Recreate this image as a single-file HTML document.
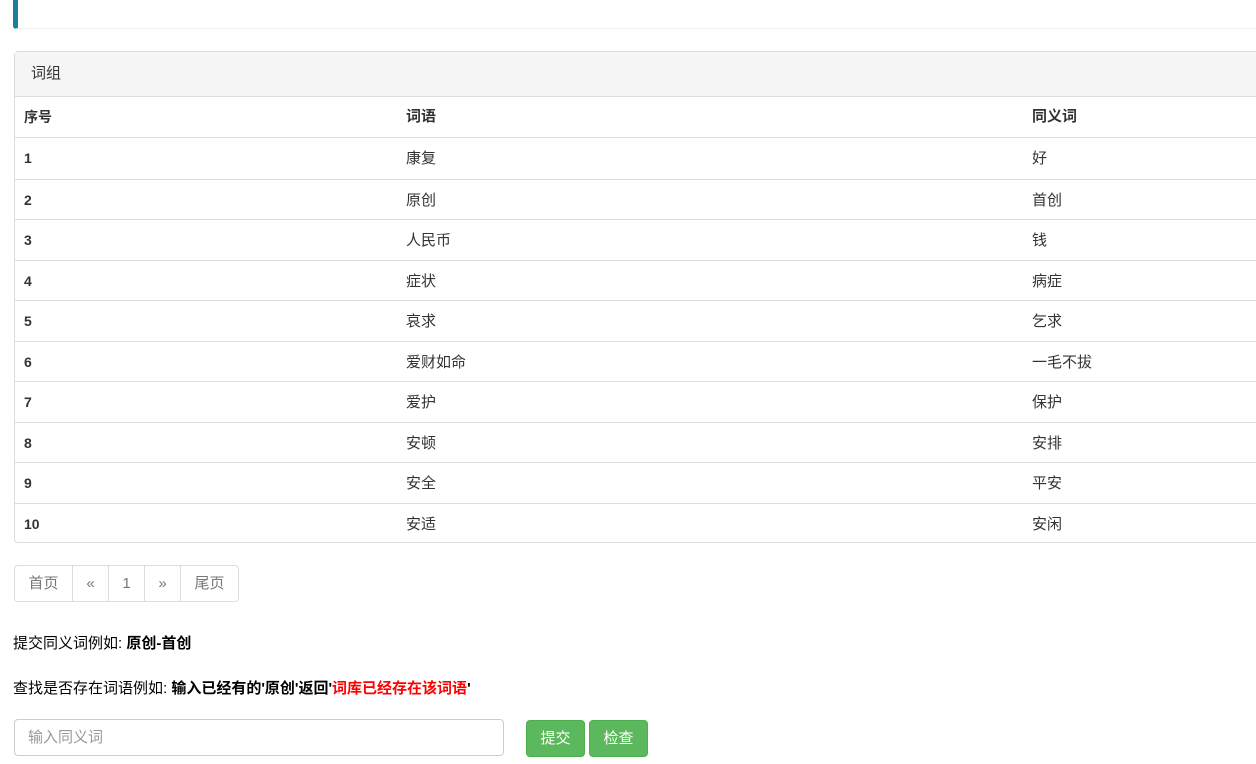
<!DOCTYPE html>
<html><head><meta charset="utf-8"><style>
*{box-sizing:border-box}
body{margin:0;width:1256px;height:764px;overflow:hidden;background:#fff;font-family:"Liberation Sans","Noto Sans CJK SC",sans-serif;font-size:15px;color:#333}
.top{position:absolute;left:13px;top:0;width:1300px;height:29px;border-left:5px solid #1b809e;border-bottom:1px solid #eee;border-radius:0 0 0 3px}
.panel{position:absolute;left:14px;top:51px;width:1300px;border:1px solid #ddd;border-radius:4px;height:492px}
.ph{height:45px;background:#f5f5f5;border-bottom:1px solid #ddd;padding:12px 16px;line-height:20px}
.row{height:40.5px;border-top:1px solid #ddd;position:relative;line-height:41px}
.row.h{border-top:none;font-weight:bold;border-bottom:1px solid #ddd;height:41px;line-height:40px}
.row span{position:absolute}
.c1{left:9px}.c2{left:391px}.c3{left:1017px}
.row .c1{font-weight:bold;font-size:14px}
.pg{position:absolute;left:14px;top:565px;display:flex;height:37px}
.pg div{border:1px solid #ddd;margin-left:-1px;line-height:35px;text-align:center;color:#777}
.pg div:first-child{border-radius:4px 0 0 4px;margin-left:0}
.pg div:last-child{border-radius:0 4px 4px 0}
.t{position:absolute;left:13px;color:#000}
.inp{position:absolute;left:14px;top:719px;width:490px;height:37px;border:1px solid #ccc;border-radius:4px;padding:0 13px;line-height:35px;color:#999}
.btn{position:absolute;top:720px;height:37px;width:59px;background:#5cb85c;border:1px solid #4cae4c;border-radius:4px;color:#fff;text-align:center;line-height:35px}
</style></head><body>
<div class="top"></div>
<div class="panel">
<div class="ph">词组</div>
<div class="row h"><span class="c1">序号</span><span class="c2">词语</span><span class="c3">同义词</span></div>
<div class="row" style="border-top:none"><span class="c1">1</span><span class="c2">康复</span><span class="c3">好</span></div>
<div class="row"><span class="c1">2</span><span class="c2">原创</span><span class="c3">首创</span></div>
<div class="row"><span class="c1">3</span><span class="c2">人民币</span><span class="c3">钱</span></div>
<div class="row"><span class="c1">4</span><span class="c2">症状</span><span class="c3">病症</span></div>
<div class="row"><span class="c1">5</span><span class="c2">哀求</span><span class="c3">乞求</span></div>
<div class="row"><span class="c1">6</span><span class="c2">爱财如命</span><span class="c3">一毛不拔</span></div>
<div class="row"><span class="c1">7</span><span class="c2">爱护</span><span class="c3">保护</span></div>
<div class="row"><span class="c1">8</span><span class="c2">安顿</span><span class="c3">安排</span></div>
<div class="row"><span class="c1">9</span><span class="c2">安全</span><span class="c3">平安</span></div>
<div class="row"><span class="c1">10</span><span class="c2">安适</span><span class="c3">安闲</span></div>
</div>
<div class="pg"><div style="width:59px">首页</div><div style="width:37px">«</div><div style="width:37px">1</div><div style="width:37px">»</div><div style="width:59px">尾页</div></div>
<div class="t" style="top:632px">提交同义词例如: <b>原创-首创</b></div>
<div class="t" style="top:677px">查找是否存在词语例如: <b>输入已经有的'原创'返回'<span style="color:#f00">词库已经存在该词语</span>'</b></div>
<div class="inp">输入同义词</div>
<div class="btn" style="left:526px">提交</div>
<div class="btn" style="left:589px">检查</div>
</body></html>
